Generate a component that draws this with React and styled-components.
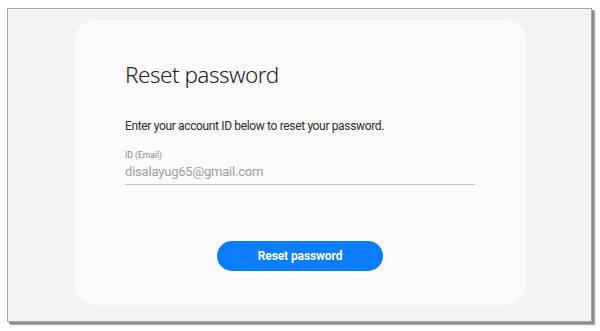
import styled, { createGlobalStyle } from 'styled-components';

const GlobalStyle = createGlobalStyle`
  html, body {
    margin: 0;
    padding: 0;
    background: #ffffff;
  }
  body {
    font-family: 'Roboto', 'Noto Sans', sans-serif;
  }
`;

function App() {
  return (
    <>
      <GlobalStyle />
      <StyledPage>
        <div className="frame">
          <div className="card">
            <h1 className="title">Reset password</h1>
            <p className="description">
              Enter your account ID below to reset your password.
            </p>

            <div className="field">
              <label className="field-label" htmlFor="email">
                ID (Email)
              </label>
              <input
                className="field-input"
                id="email"
                type="text"
                defaultValue="disalayug65@gmail.com"
              />
            </div>

            <div className="actions">
              <button className="blue_button" type="button">
                Reset password
              </button>
            </div>
          </div>
        </div>
      </StyledPage>
    </>
  );
}

export default App;

const StyledPage = styled.div`
  width: 600px;
  height: 331px;
  box-sizing: border-box;
  padding: 8px 0 0 7px;
  background: #ffffff;

  & .frame {
    box-sizing: border-box;
    width: 585px;
    height: 314px;
    border: 1px solid #a8a8a8;
    box-shadow: 2px 2px 0 #8c8c8c, 3px 3px 1px #b0b0b0;
    background: #f3f3f3;
    padding: 11px 0 0 67px;
  }

  & .card {
    box-sizing: border-box;
    width: 451px;
    height: 285px;
    border-radius: 20px;
    background: #fbfbfb;
    padding: 41px 51px 0 50px;
    display: flex;
    flex-direction: column;
  }

  & .title {
    margin: 0;
    font-family: 'Noto Sans', sans-serif;
    font-weight: 300;
    font-size: 22.5px;
    line-height: 28px;
    color: #222;
    letter-spacing: -0.5px;
  }

  & .description {
    margin: 29px 0 0;
    font-size: 12px;
    line-height: 16px;
    color: #2b2b2b;
    letter-spacing: -0.35px;
  }

  & .field {
    display: flex;
    flex-direction: column;
    margin-top: 16px;
  }

  & .field-label {
    font-size: 8.5px;
    line-height: 11px;
    color: #8a8a8a;
  }

  & .field-input {
    margin-top: 2px;
    width: 100%;
    box-sizing: border-box;
    padding: 0 0 3px;
    border: 0;
    border-bottom: 1px solid #c2c2c2;
    background: transparent;
    outline: none;
    font-family: 'Roboto', sans-serif;
    font-size: 13px;
    line-height: 18px;
    color: #a0a0a0;
    letter-spacing: -0.2px;
  }

  & .actions {
    display: flex;
    justify-content: center;
    margin-top: 56px;
  }

  & .blue_button {
    width: 166px;
    height: 30px;
    border: 0;
    border-radius: 15px;
    background: #0b7dff;
    color: #ffffff;
    font-family: 'Roboto', sans-serif;
    font-weight: 700;
    font-size: 12px;
    letter-spacing: -0.1px;
  }
`;
